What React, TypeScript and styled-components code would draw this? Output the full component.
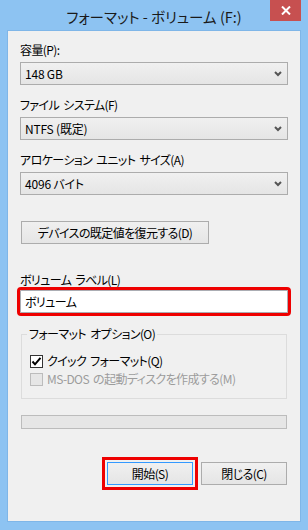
import React from "react";
import styled, { createGlobalStyle } from "styled-components";

const Global = createGlobalStyle`
  html, body { margin: 0; padding: 0; }
  body {
    background: #8dc3f2;
    font-family: "Noto Sans CJK JP", "Noto Sans", sans-serif;
    font-feature-settings: "palt";
    font-size: 12px;
    color: #000;
  }
`;

const Frame = styled.div`
  width: 308px;
  height: 530px;
  box-sizing: border-box;
  background: #8dc3f2;
  padding: 0 7px 8px;
  display: flex;
  flex-direction: column;
`;

const TitleBar = styled.div`
  height: 30px;
  margin: 0 -7px;
  display: grid;
  grid-template-columns: 1fr auto 1fr;
  align-items: start;
`;

const Title = styled.div`
  grid-column: 2;
  font-size: 14.5px;
  line-height: 20px;
  margin-top: 7px;
  color: #1a1a1a;
  white-space: nowrap;
`;

const CloseButton = styled.div`
  grid-column: 3;
  justify-self: end;
  width: 31px;
  height: 21px;
  margin-right: 7px;
  background: #c75050;
  display: flex;
  align-items: center;
  justify-content: center;
`;

const Client = styled.div`
  flex: 1;
  background: #f0f0f0;
  border: 1px solid #7fb6e8;
  padding: 0 12px;
  display: flex;
  flex-direction: column;
  letter-spacing: -0.6px;
  word-spacing: 2px;
`;

const Label = styled.div<{ $mt: number }>`
  margin-top: ${(p) => p.$mt}px;
  line-height: 16px;
  height: 16px;
  white-space: nowrap;
`;

const Combo = styled.div<{ $mt: number }>`
  margin-top: ${(p) => p.$mt}px;
  height: 23px;
  box-sizing: border-box;
  border: 1px solid #acacac;
  background: linear-gradient(#f0f0f0, #e5e5e5);
  display: flex;
  align-items: center;
  justify-content: space-between;
  padding: 0 5px 0 4px;
  line-height: 16px;
  letter-spacing: -0.2px;
  word-spacing: 0;
`;

const PushButton = styled.div<{ $mt?: number; $w: number; $default?: boolean; $highlight?: boolean }>`
  margin-top: ${(p) => p.$mt ?? 0}px;
  width: ${(p) => p.$w}px;
  height: 23px;
  box-sizing: border-box;
  border: 1px solid ${(p) => (p.$default ? "#3399ff" : "#acacac")};
  background: linear-gradient(#f0f0f0, #e5e5e5);
  display: flex;
  align-items: center;
  justify-content: center;
  line-height: 16px;
  white-space: nowrap;
  outline: ${(p) => (p.$highlight ? "3px solid #ee0000" : "none")};
  outline-offset: 2px;
`;

const RestoreButton = styled(PushButton)`
  margin-left: 1px;
`;

const TextInput = styled.div<{ $mt: number }>`
  margin-top: ${(p) => p.$mt}px;
  height: 23px;
  box-sizing: border-box;
  border: 1px solid #abadb3;
  background: #fff;
  display: flex;
  align-items: center;
  padding: 0 4px;
  line-height: 16px;
  outline: 3px solid #ee0000;
  outline-offset: 0;
  border-radius: 1px;
`;

const Group = styled.fieldset`
  margin: 13px 1px 0;
  padding: 0 8px 11px;
  border: 1px solid #dcdcdc;
  min-width: 0;
`;

const Legend = styled.legend`
  padding: 0 2px;
  margin-left: -3px;
  line-height: 16px;
  white-space: nowrap;
`;

const CheckRow = styled.label<{ $mt: number; $disabled?: boolean }>`
  margin-top: ${(p) => p.$mt}px;
  height: 16px;
  display: flex;
  align-items: center;
  gap: 4px;
  line-height: 16px;
  white-space: nowrap;
  color: ${(p) => (p.$disabled ? "#9c9c9c" : "#000")};
`;

const Box = styled.span<{ $disabled?: boolean }>`
  width: 13px;
  height: 13px;
  box-sizing: border-box;
  border: 1px solid ${(p) => (p.$disabled ? "#bcbcbc" : "#333")};
  background: ${(p) => (p.$disabled ? "#e6e6e6" : "#fff")};
  display: flex;
  align-items: center;
  justify-content: center;
  flex: none;
`;

const Progress = styled.div`
  margin: 16px 1px 0;
  height: 14px;
  box-sizing: border-box;
  border: 1px solid #bcbcbc;
  background: #e6e6e6;
`;

const ButtonRow = styled.div`
  margin-top: 33px;
  margin-right: 1px;
  display: flex;
  justify-content: flex-end;
  gap: 8px;
`;

const Chevron = () => (
  <svg width="8" height="6" viewBox="0 0 8 6">
    <path d="M1 1 L4 4 L7 1" fill="none" stroke="#555" strokeWidth="2" />
  </svg>
);

const Check = () => (
  <svg width="11" height="11" viewBox="0 0 11 11">
    <path d="M1.5 5.5 L4 8.3 L9.5 1.8" fill="none" stroke="#000" strokeWidth="2" />
  </svg>
);

export default function App() {
  return (
    <>
      <Global />
      <Frame>
        <TitleBar>
          <Title>フォーマット - ボリューム (F:)</Title>
          <CloseButton>
            <svg width="10" height="9" viewBox="0 0 10 9">
              <path d="M1 0.5 L9 8.5 M9 0.5 L1 8.5" stroke="#fff" strokeWidth="2" />
            </svg>
          </CloseButton>
        </TitleBar>
        <Client>
          <Label $mt={11}>容量(P):</Label>
          <Combo $mt={4}>
            <span>148 GB</span>
            <Chevron />
          </Combo>
          <Label $mt={12}>ファイル システム(F)</Label>
          <Combo $mt={4}>
            <span>NTFS (既定)</span>
            <Chevron />
          </Combo>
          <Label $mt={12}>アロケーション ユニット サイズ(A)</Label>
          <Combo $mt={4}>
            <span>4096 バイト</span>
            <Chevron />
          </Combo>
          <RestoreButton $mt={26} $w={188}>デバイスの既定値を復元する(D)</RestoreButton>
          <Label $mt={28}>ボリューム ラベル(L)</Label>
          <TextInput $mt={2}>ボリューム</TextInput>
          <Group>
            <Legend>フォーマット オプション(O)</Legend>
            <CheckRow $mt={11}>
              <Box>
                <Check />
              </Box>
              クイック フォーマット(Q)
            </CheckRow>
            <CheckRow $mt={2} $disabled>
              <Box $disabled />
              MS-DOS の起動ディスクを作成する(M)
            </CheckRow>
          </Group>
          <Progress />
          <ButtonRow>
            <PushButton $w={86} $default $highlight>開始(S)</PushButton>
            <PushButton $w={86}>閉じる(C)</PushButton>
          </ButtonRow>
        </Client>
      </Frame>
    </>
  );
}
